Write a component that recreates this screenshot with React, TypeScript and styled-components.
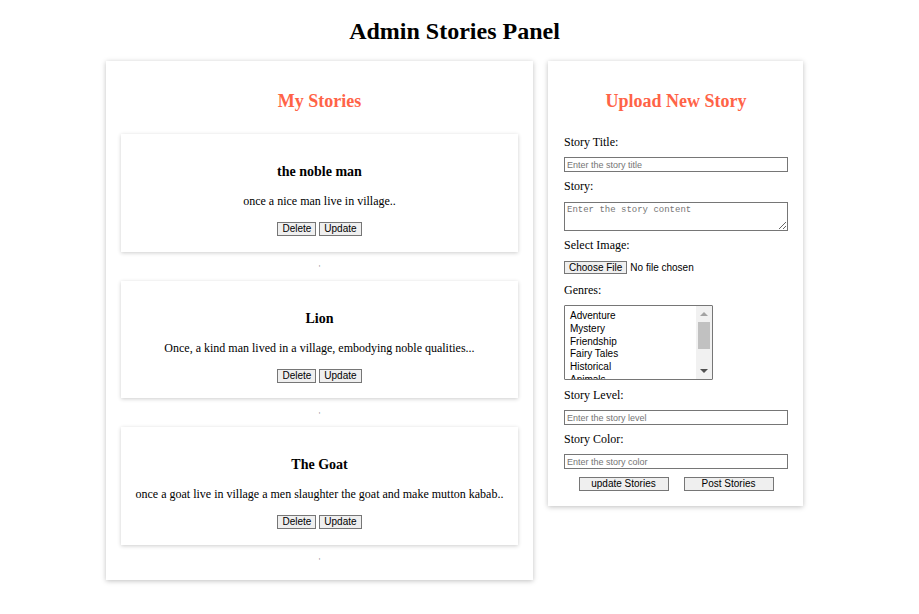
import React from 'react';
import styled, { createGlobalStyle } from 'styled-components';

const GlobalStyle = createGlobalStyle`
  body {
    margin: 0;
    background: #ffffff;
    font-family: 'Liberation Serif', 'Times New Roman', serif;
    color: #000000;
  }
`;

const Page = styled.div`
  padding-right: 10px;
  padding-bottom: 20px;
`;

const PageTitle = styled.h1`
  margin: 17px 0 16px;
  font-size: 24px;
  line-height: 28px;
  font-weight: 700;
  text-align: center;
`;

const Columns = styled.div`
  display: flex;
  justify-content: center;
  align-items: flex-start;
  gap: 15px;
`;

const Panel = styled.section<{ $width: number }>`
  width: ${(p) => p.$width}px;
  box-sizing: border-box;
  background: #ffffff;
  box-shadow: 0 1px 5px rgba(0, 0, 0, 0.25);
`;

const StoriesPanel = styled(Panel)`
  padding: 15px 15px 6px;
`;

const UploadPanel = styled(Panel)`
  padding: 15px 15px 15px 16px;
`;

const PanelTitle = styled.h2`
  margin: 15px 0 22px;
  font-size: 18px;
  line-height: 21px;
  font-weight: 700;
  color: #ff6347;
  text-align: center;
`;

const StoryCard = styled.article`
  padding: 16px 10px 15.5px;
  background: #ffffff;
  box-shadow: 0 1px 4px rgba(0, 0, 0, 0.2);
  text-align: center;
`;

const StoryTitle = styled.h3`
  margin: 14px 0 0;
  font-size: 14px;
  line-height: 16px;
  font-weight: 700;
`;

const StoryText = styled.p`
  margin: 13px 0;
  font-size: 12px;
  line-height: 16px;
`;

const ButtonRow = styled.div`
  display: flex;
  justify-content: center;
  gap: 3px;
`;

const SmallButton = styled.button`
  height: 14px;
  padding: 0 4px;
  box-sizing: border-box;
  font-family: 'Liberation Sans', Arial, sans-serif;
  font-size: 10px;
  line-height: 12px;
  color: #000000;
  background: #efefef;
  border: 1px solid #767676;
  border-radius: 0;
`;

const Separator = styled.div`
  height: 29px;
  box-sizing: border-box;
  padding-bottom: 5px;
  display: flex;
  align-items: center;
  justify-content: center;
  font-family: 'Liberation Sans', Arial, sans-serif;
  font-size: 7px;
  color: #6a6a6a;
`;

const Form = styled.form`
  display: flex;
  flex-direction: column;
`;

const Label = styled.label`
  font-size: 12px;
  line-height: 16px;
  margin-bottom: 7px;
`;

const TextInput = styled.input`
  width: 224px;
  height: 15px;
  box-sizing: border-box;
  margin: 0 0 6px;
  padding: 0 2px;
  border: 1px solid #767676;
  border-radius: 0;
  font-family: 'Liberation Sans', Arial, sans-serif;
  font-size: 9px;
  &::placeholder {
    color: #757575;
  }
`;

const TextArea = styled.textarea`
  width: 224px;
  height: 29px;
  box-sizing: border-box;
  margin: 1px 0 6px;
  padding: 2px;
  border: 1px solid #767676;
  border-radius: 0;
  font-family: 'Liberation Mono', 'DejaVu Sans Mono', monospace;
  font-size: 9px;
  &::placeholder {
    color: #757575;
  }
`;

const FileInput = styled.input`
  height: 13px;
  margin: 1px 0 8px;
  font-family: 'Liberation Sans', Arial, sans-serif;
  font-size: 10px;
  line-height: 13px;
  &::file-selector-button {
    height: 13px;
    margin-right: 3px;
    padding: 0 4px;
    font-family: 'Liberation Sans', Arial, sans-serif;
    font-size: 10px;
    line-height: 11px;
    background: #efefef;
    border: 1px solid #767676;
    border-radius: 0;
  }
`;

const ListBox = styled.div`
  width: 149px;
  height: 75px;
  box-sizing: border-box;
  margin-bottom: 7px;
  display: flex;
  border: 1px solid #767676;
  border-radius: 1px;
  overflow: hidden;
`;

const OptionList = styled.ul`
  flex: 1;
  margin: 0;
  padding: 4px 5px;
  list-style: none;
  font-family: 'Liberation Sans', Arial, sans-serif;
  font-size: 10px;
  line-height: 12.8px;
`;

const ScrollBar = styled.div`
  width: 16px;
  background: #f1f1f1;
  display: flex;
  flex-direction: column;
  align-items: center;
`;

const Arrow = styled.div<{ $up?: boolean }>`
  width: 0;
  height: 0;
  margin: ${(p) => (p.$up ? '6px 0 0' : 'auto 0 6px')};
  border-left: 4px solid transparent;
  border-right: 4px solid transparent;
  ${(p) => (p.$up ? 'border-bottom: 4px solid #a3a3a3;' : 'border-top: 4px solid #505050;')}
`;

const Thumb = styled.div`
  width: 12px;
  height: 27px;
  margin-top: 6px;
  background: #c1c1c1;
`;

const FormButtons = styled.div`
  display: flex;
  justify-content: center;
  gap: 15px;
  margin-top: 2px;
`;

const WideButton = styled(SmallButton)`
  width: 90px;
`;

const stories = [
  { title: 'the noble man', text: 'once a nice man live in village..' },
  { title: 'Lion', text: 'Once, a kind man lived in a village, embodying noble qualities...' },
  { title: 'The Goat', text: 'once a goat live in village a men slaughter the goat and make mutton kabab..' },
];

const genres = ['Adventure', 'Mystery', 'Friendship', 'Fairy Tales', 'Historical', 'Animals'];

export default function App() {
  return (
    <Page>
      <GlobalStyle />
      <PageTitle>Admin Stories Panel</PageTitle>
      <Columns>
        <StoriesPanel $width={427}>
          <PanelTitle>My Stories</PanelTitle>
          {stories.map((s) => (
            <React.Fragment key={s.title}>
              <StoryCard>
                <StoryTitle>{s.title}</StoryTitle>
                <StoryText>{s.text}</StoryText>
                <ButtonRow>
                  <SmallButton>Delete</SmallButton>
                  <SmallButton>Update</SmallButton>
                </ButtonRow>
              </StoryCard>
              <Separator>,</Separator>
            </React.Fragment>
          ))}
        </StoriesPanel>

        <UploadPanel $width={255}>
          <PanelTitle>Upload New Story</PanelTitle>
          <Form onSubmit={(e) => e.preventDefault()}>
            <Label>Story Title:</Label>
            <TextInput placeholder="Enter the story title" />
            <Label>Story:</Label>
            <TextArea placeholder="Enter the story content" />
            <Label>Select Image:</Label>
            <FileInput type="file" />
            <Label>Genres:</Label>
            <ListBox>
              <OptionList>
                {genres.map((g) => (
                  <li key={g}>{g}</li>
                ))}
              </OptionList>
              <ScrollBar>
                <Arrow $up />
                <Thumb />
                <Arrow />
              </ScrollBar>
            </ListBox>
            <Label>Story Level:</Label>
            <TextInput placeholder="Enter the story level" />
            <Label>Story Color:</Label>
            <TextInput placeholder="Enter the story color" />
            <FormButtons>
              <WideButton type="button">update Stories</WideButton>
              <WideButton type="button">Post Stories</WideButton>
            </FormButtons>
          </Form>
        </UploadPanel>
      </Columns>
    </Page>
  );
}
